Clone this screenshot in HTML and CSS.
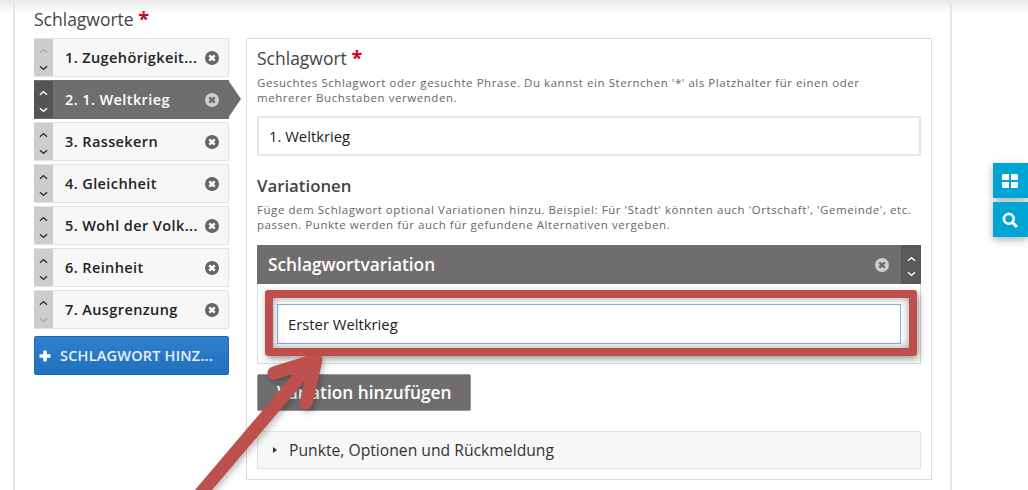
FILE: index.html
```html
<!doctype html>
<html lang="de">
<head>
    <meta charset="UTF-8">
    <title>Schlagworte</title>
    <link rel="stylesheet" href="styles.css">
</head>
<body>

<svg width="0" height="0" class="defs">
    <symbol id="i-up" viewBox="0 0 10 6"><path d="M1 5L5 1.5L9 5" fill="none" stroke="currentColor" stroke-width="1.5"/></symbol>
    <symbol id="i-down" viewBox="0 0 10 6"><path d="M1 1L5 4.5L9 1" fill="none" stroke="currentColor" stroke-width="1.5"/></symbol>
    <symbol id="i-close" viewBox="0 0 14 14">
        <circle cx="7" cy="7" r="7" fill="currentColor"/>
        <path class="close-x" d="M4.3 4.3L9.7 9.7M9.7 4.3L4.3 9.7" fill="none"/>
    </symbol>
</svg>

<div class="card">
    <h2 class="title">Schlagworte <span class="req">*</span></h2>
    <div class="columns">
        <div class="list">
            <div class="item">
                <div class="handle"><svg class="off"><use href="#i-up"/></svg><svg><use href="#i-down"/></svg></div>
                <span class="label">1. Zugehörigkeit...</span>
                <svg class="close"><use href="#i-close"/></svg>
            </div>
            <div class="item active">
                <div class="handle"><svg><use href="#i-up"/></svg><svg><use href="#i-down"/></svg></div>
                <span class="label">2. 1. Weltkrieg</span>
                <svg class="close"><use href="#i-close"/></svg>
            </div>
            <div class="item">
                <div class="handle"><svg><use href="#i-up"/></svg><svg><use href="#i-down"/></svg></div>
                <span class="label">3. Rassekern</span>
                <svg class="close"><use href="#i-close"/></svg>
            </div>
            <div class="item">
                <div class="handle"><svg><use href="#i-up"/></svg><svg><use href="#i-down"/></svg></div>
                <span class="label">4. Gleichheit</span>
                <svg class="close"><use href="#i-close"/></svg>
            </div>
            <div class="item">
                <div class="handle"><svg><use href="#i-up"/></svg><svg><use href="#i-down"/></svg></div>
                <span class="label">5. Wohl der Volk...</span>
                <svg class="close"><use href="#i-close"/></svg>
            </div>
            <div class="item">
                <div class="handle"><svg><use href="#i-up"/></svg><svg><use href="#i-down"/></svg></div>
                <span class="label">6. Reinheit</span>
                <svg class="close"><use href="#i-close"/></svg>
            </div>
            <div class="item">
                <div class="handle"><svg><use href="#i-up"/></svg><svg class="off"><use href="#i-down"/></svg></div>
                <span class="label">7. Ausgrenzung</span>
                <svg class="close"><use href="#i-close"/></svg>
            </div>
            <a href="#" class="btn-add">
                <svg class="plus" viewBox="0 0 12 12"><path d="M6 0.5V11.5M0.5 6H11.5" stroke="#fff" stroke-width="3.6" fill="none"/></svg>
                SCHLAGWORT HINZ...
            </a>
        </div>

        <div class="panel">
            <h3 class="head">Schlagwort <span class="req">*</span></h3>
            <p class="hint">Gesuchtes Schlagwort oder gesuchte Phrase. Du kannst ein Sternchen '*' als Platzhalter für einen oder<br>mehrerer Buchstaben verwenden.</p>
            <div class="field">1. Weltkrieg</div>

            <h3 class="head head-var">Variationen</h3>
            <p class="hint">Füge dem Schlagwort optional Variationen hinzu. Beispiel: Für 'Stadt' könnten auch 'Ortschaft', 'Gemeinde', etc. passen. Punkte werden für auch für gefundene Alternativen vergeben.</p>

            <div class="variation">
                <div class="var-header">
                    <span class="var-title">Schlagwortvariation</span>
                    <svg class="close"><use href="#i-close"/></svg>
                    <div class="var-handle"><svg><use href="#i-up"/></svg><svg><use href="#i-down"/></svg></div>
                </div>
                <div class="var-body">
                    <div class="field focus">Erster Weltkrieg</div>
                </div>
            </div>

            <a href="#" class="btn-var">Variation hinzufügen</a>

            <div class="collapse"><span class="caret"></span>Punkte, Optionen und Rückmeldung</div>
        </div>
    </div>
</div>

<div class="top-shade"></div>

<div class="side-tools">
    <a href="#" class="tool">
        <svg viewBox="0 0 16 14" width="16" height="14"><path fill="#fff" d="M1 0H7V6H0V1ZM9 0H15L16 1V6H9ZM0 8H7V14H1L0 13ZM9 8H16V13L15 14H9Z"/></svg>
    </a>
    <a href="#" class="tool">
        <svg viewBox="0 0 16 16" width="16" height="16"><circle cx="6.8" cy="6.8" r="4.9" fill="none" stroke="#fff" stroke-width="2.6"/><path d="M10.5 10.5L15 15" stroke="#fff" stroke-width="3" fill="none"/></svg>
    </a>
</div>

<!-- Markierung aus dem Screenshot -->
<div class="mark"></div>
<svg class="arrow" width="1028" height="490" viewBox="0 0 1028 490">
    <g fill="none" stroke="#bd4f4c" stroke-width="13" stroke-linecap="round" stroke-linejoin="round">
        <path d="M195 500L314 360"/>
        <path d="M274 373L316 360L306 403"/>
    </g>
</svg>

</body>
</html>
```

FILE: styles.css
```css
* {
    margin: 0;
    padding: 0;
    box-sizing: border-box;
}
html, body {
    height: 490px;
    overflow: hidden;
}
body {
    background: #fff;
    font-family: "Open Sans", "Liberation Sans", sans-serif;
    color: #333;
    padding-left: 13px;
}
a {
    text-decoration: none;
}
.defs {
    position: absolute;
}
.req {
    color: #d0021b;
    font-weight: 700;
    font-size: 20px;
    line-height: 0;
}
.card {
    width: 939px;
    height: 490px;
    border-left: 2px solid #e4e4e4;
    border-right: 2px solid #e4e4e4;
    padding: 8px 0 0 19px;
    background: #fff;
}
.title {
    font-size: 17.5px;
    font-weight: 400;
    line-height: 23px;
    color: #444;
    margin-bottom: 7px;
}
.columns {
    display: flex;
    gap: 17px;
    align-items: flex-start;
}

/* Liste links */
.list {
    width: 195px;
    flex-shrink: 0;
    display: flex;
    flex-direction: column;
    gap: 3px;
}
.item {
    position: relative;
    height: 39px;
    display: flex;
    align-items: center;
    background: #f7f7f7;
    border: 1px solid #e2e2e2;
    color: #222;
}
.handle {
    width: 19px;
    height: 100%;
    margin-left: -1px;
    flex-shrink: 0;
    background: #cdcdcd;
    color: #333;
    display: flex;
    flex-direction: column;
    justify-content: space-between;
    align-items: center;
    padding: 9px 0 5px;
}
.handle svg, .var-handle svg {
    width: 9px;
    height: 6px;
    display: block;
}
.handle svg.off {
    color: #aaa;
}
.label {
    flex: 1;
    padding-left: 12px;
    font-size: 14.5px;
    font-weight: 600;
    white-space: nowrap;
    letter-spacing: 0.4px;
}
.close {
    width: 14px;
    height: 14px;
    flex-shrink: 0;
    color: #666566;
}
.close-x {
    stroke: var(--x-color, #fff);
    stroke-width: 2.6;
}
.item .close {
    margin-right: 9px;
}
.item.active {
    background: #6f6d6e;
    border-color: #6f6d6e;
    color: #fff;
}
.item.active:after {
    content: '';
    position: absolute;
    left: 100%;
    top: -1px;
    border-left: 13px solid #6f6d6e;
    border-top: 19.5px solid transparent;
    border-bottom: 19.5px solid transparent;
}
.item.active .handle {
    background: #555354;
    color: #fff;
}
.item.active .close, .var-header .close {
    color: #cfcfcf;
    --x-color: #6f6d6e;
}
.btn-add {
    margin-top: 4px;
    height: 39px;
    display: flex;
    align-items: center;
    gap: 9px;
    padding-left: 4px;
    background: linear-gradient(#2f80cd, #2170bf);
    border: 1px solid #1e68b2;
    border-radius: 2px;
    color: #e8f1fa;
    font-size: 14.5px;
    font-weight: 600;
    letter-spacing: 0.2px;
    white-space: nowrap;
}
.plus {
    width: 12px;
    height: 12px;
    flex-shrink: 0;
}

/* Panel rechts */
.panel {
    width: 686px;
    flex-shrink: 0;
    height: 442px;
    border: 1px solid #dcdcdc;
    padding: 7px 10px 0;
}
.head {
    font-size: 17.5px;
    font-weight: 400;
    line-height: 24px;
    color: #444;
}
.head-var {
    margin-top: 18px;
    font-weight: 600;
    font-size: 16.8px;
    color: #444;
}
.hint {
    margin-top: 4px;
    font-size: 11.5px;
    line-height: 15px;
    letter-spacing: 0.55px;
    color: #666;
}
.panel > .head:first-child + .hint {
    margin-top: 5px;
}
.field {
    margin-top: 11px;
    height: 40px;
    padding-left: 10px;
    display: flex;
    align-items: center;
    background: #fff;
    border: 2px solid #e6e6e6;
    font-size: 14.8px;
    color: #222;
}
.variation {
    margin-top: 13px;
}
.var-header {
    height: 39px;
    display: flex;
    align-items: center;
    background: #6f6d6e;
    color: #fff;
}
.var-title {
    flex: 1;
    padding-left: 11px;
    font-size: 17.3px;
    font-weight: 600;
}
.var-header .close {
    margin-right: 12px;
}
.var-handle {
    width: 20px;
    height: 100%;
    background: #5a5859;
    display: flex;
    flex-direction: column;
    justify-content: space-between;
    align-items: center;
    padding: 11px 0 7px;
}
.var-body {
    height: 80px;
    border: 1px solid #dcdcdc;
    border-top: 0;
    padding: 20px 19px;
}
.field.focus {
    margin-top: 0;
    border: 1px solid #86b4e6;
    padding-left: 10px;
}
.btn-var {
    display: inline-block;
    margin-top: 10px;
    height: 37px;
    line-height: 35px;
    padding: 0 19px;
    width: 214px;
    background: #6f6d6e;
    border: 1px solid #9a9899;
    border-radius: 2px;
    color: #fff;
    font-size: 17.3px;
    font-weight: 600;
    white-space: nowrap;
}
.collapse {
    margin-top: 20px;
    height: 38px;
    display: flex;
    align-items: center;
    padding-left: 15px;
    background: #f7f7f7;
    border: 1px solid #e2e2e2;
    font-size: 15.7px;
    color: #333;
}
.caret {
    border-left: 4px solid #333;
    border-top: 3px solid transparent;
    border-bottom: 3px solid transparent;
    margin-right: 12px;
}

/* Overlays */
.top-shade {
    position: absolute;
    left: 0;
    right: 0;
    top: 0;
    height: 14px;
    background: linear-gradient(#e9e9e9, rgba(255,255,255,0));
}
.side-tools {
    position: absolute;
    top: 163px;
    right: 0;
    width: 35px;
    display: flex;
    flex-direction: column;
    gap: 4px;
}
.tool {
    height: 35px;
    display: flex;
    align-items: center;
    justify-content: center;
    padding-right: 2px;
    background: #00a5d6;
    box-shadow: 0 3px 8px rgba(0,0,0,0.3);
}
.mark {
    position: absolute;
    left: 265px;
    top: 290px;
    width: 652px;
    height: 66px;
    border: 8px solid #bd4f4c;
    border-radius: 3px;
    box-shadow: 2px 3px 7px rgba(0,0,0,0.4), inset 0 0 8px rgba(0,0,0,0.4);
}
.arrow {
    position: absolute;
    left: 0;
    top: 0;
    filter: drop-shadow(2px 3px 3px rgba(0,0,0,0.25));
}
```
